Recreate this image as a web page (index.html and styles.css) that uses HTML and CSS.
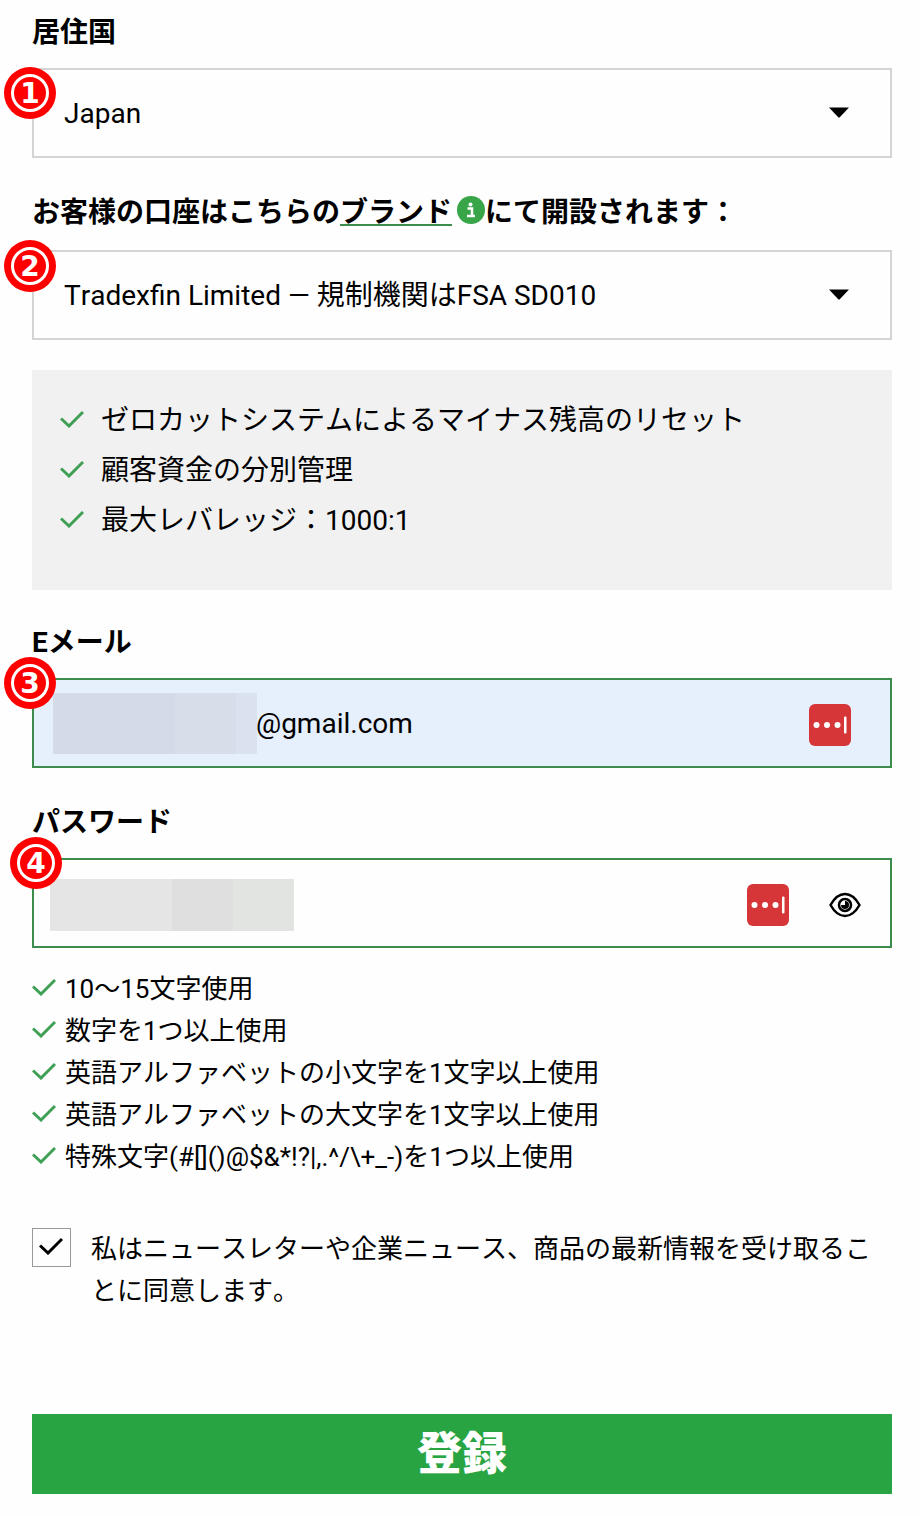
FILE: index.html
```html
<!DOCTYPE html>
<html lang="ja">

<head>
    <meta charset="UTF-8">
    <meta name="viewport" content="width=device-width, initial-scale=1.0">
    <title>登録</title>

    <link rel="stylesheet" href="styles.css">
</head>

<body>
    <!-- shared icons -->
    <svg class="icon-defs" width="0" height="0" aria-hidden="true">
        <symbol id="check" viewBox="0 0 24 18">
            <path d="M1 8.500L9 16L23 2" fill="none" stroke="currentColor" stroke-width="3" />
        </symbol>
        <symbol id="arrow" viewBox="0 0 20 11">
            <path d="M0 0.500H20L11 10Q10 11 9 10Z" fill="currentColor" />
        </symbol>
        <symbol id="vault" viewBox="0 0 42 42">
            <rect width="42" height="42" rx="6" fill="#d63638" />
            <circle cx="7.500" cy="21" r="3" fill="#fff" />
            <circle cx="18" cy="21" r="3" fill="#fff" />
            <circle cx="28.500" cy="21" r="3" fill="#fff" />
            <rect x="35" y="12.500" width="2.500" height="17" rx="1" fill="#fff" />
        </symbol>
    </svg>

    <form class="register-form">
        <div class="form-group">
            <label class="form-label" for="country">居住国</label>
            <div class="field">
                <span class="badge badge-country">1</span>
                <select class="form-control" id="country">
                    <option>Japan</option>
                </select>
                <svg class="field-arrow" aria-hidden="true"><use href="#arrow" /></svg>
            </div>
        </div>

        <div class="form-group form-group-brand">
            <label class="form-label" for="brand">お客様の口座はこちらの<a class="brand-link" href="#">ブランド</a><svg class="info-icon"
                    viewBox="0 0 28 28" aria-hidden="true">
                    <circle cx="14" cy="14" r="14" fill="#37a548" />
                    <circle cx="13.500" cy="8.500" r="2" fill="#fff" />
                    <path d="M10.500 12.500H15V20M10 20H18" fill="none" stroke="#fff" stroke-width="2.500" />
                </svg>にて開設されます：</label>
            <div class="field">
                <span class="badge badge-brand">2</span>
                <select class="form-control" id="brand">
                    <option>Tradexfin Limited — 規制機関はFSA SD010</option>
                </select>
                <svg class="field-arrow" aria-hidden="true"><use href="#arrow" /></svg>
            </div>
        </div>

        <ul class="benefits">
            <li><svg class="check" aria-hidden="true"><use href="#check" /></svg>ゼロカットシステムによるマイナス残高のリセット</li>
            <li><svg class="check" aria-hidden="true"><use href="#check" /></svg>顧客資金の分別管理</li>
            <li><svg class="check" aria-hidden="true"><use href="#check" /></svg>最大レバレッジ：1000:1</li>
        </ul>

        <div class="form-group">
            <label class="form-label" for="email">Eメール</label>
            <div class="field">
                <span class="badge">3</span>
                <input class="form-control valid email-input" type="text" id="email" value="@gmail.com">
                <span class="mask mask-email"></span>
                <div class="field-tools tools-email">
                    <button class="tool" type="button" aria-label="Vault"><svg class="vault"><use href="#vault" /></svg></button>
                </div>
            </div>
        </div>

        <div class="form-group form-group-password">
            <label class="form-label" for="password">パスワード</label>
            <div class="field">
                <span class="badge badge-password">4</span>
                <input class="form-control valid" type="password" id="password">
                <span class="mask mask-password"></span>
                <div class="field-tools">
                    <button class="tool" type="button" aria-label="Vault"><svg class="vault"><use href="#vault" /></svg></button>
                    <button class="tool" type="button" aria-label="Show password">
                        <svg class="eye" viewBox="0 0 32 26">
                            <path d="M1.500 13C6 5 10.500 2 16 2S26 5 30.500 13C26 21 21.500 24 16 24S6 21 1.500 13Z" fill="none" stroke="#000" stroke-width="2.500" />
                            <circle cx="16" cy="13" r="6" fill="none" stroke="#000" stroke-width="2.500" />
                            <path d="M16 9V13H12A4 4 0 1 0 16 9Z" fill="#000" />
                        </svg>
                    </button>
                </div>
            </div>
        </div>

        <ul class="rules">
            <li><svg class="check" aria-hidden="true"><use href="#check" /></svg>10～15文字使用</li>
            <li><svg class="check" aria-hidden="true"><use href="#check" /></svg>数字を1つ以上使用</li>
            <li><svg class="check" aria-hidden="true"><use href="#check" /></svg>英語アルファベットの小文字を1文字以上使用</li>
            <li><svg class="check" aria-hidden="true"><use href="#check" /></svg>英語アルファベットの大文字を1文字以上使用</li>
            <li><svg class="check" aria-hidden="true"><use href="#check" /></svg>特殊文字(#[]()@$&amp;*!?|,.^/\+_-)を1つ以上使用</li>
        </ul>

        <div class="newsletter">
            <div class="checkbox">
                <input type="checkbox" id="newsletter" checked>
                <svg class="check" aria-hidden="true"><use href="#check" /></svg>
            </div>
            <label for="newsletter">私はニュースレターや企業ニュース、商品の最新情報を受け取ることに同意します。</label>
        </div>

        <button class="submit" type="submit">登録</button>
    </form>
</body>

</html>
```

FILE: styles.css
```css
* {
    box-sizing: border-box;
}

body {
    margin: 0;
    background-color: #fefefe;
    color: #000;
    font-family: Roboto, "Noto Sans CJK JP", sans-serif;
    font-size: 28px;
    font-kerning: none;
}

ul {
    list-style: none;
    margin: 0;
    padding: 0;
}

.icon-defs {
    position: absolute;
}

.register-form {
    padding: 10px 28px 22px 32px;
}

.form-group {
    margin-bottom: 32px;
}

.form-group-brand {
    margin-bottom: 30px;
}

.form-group-password {
    margin-bottom: 20px;
}

.form-label {
    display: flex;
    align-items: center;
    height: 40px;
    margin-bottom: 18px;
    font-weight: 700;
}

.form-group-brand .form-label {
    margin-bottom: 20px;
}

.brand-link {
    color: inherit;
    text-decoration: underline 2px #3c8c4d;
    text-decoration-skip-ink: none;
    text-underline-offset: 2px;
}

.info-icon {
    width: 28px;
    height: 28px;
    margin-left: 5px;
}

/* fields */
.field {
    position: relative;
}

.form-control {
    display: block;
    appearance: none;
    width: 100%;
    height: 90px;
    padding: 0 30px;
    border: 2px solid #d4d4d4;
    border-radius: 0;
    background-color: #fefefe;
    color: #000;
    font: inherit;
    font-kerning: none;
}

.valid {
    border-color: #3c8c4d;
}

.email-input {
    padding-left: 222px;
    background-color: #e6effc;
}

.field-arrow {
    position: absolute;
    top: 39px;
    right: 43px;
    width: 20px;
    height: 11px;
    pointer-events: none;
}

.field-tools {
    position: absolute;
    top: 2px;
    right: 31px;
    height: 100%;
    display: flex;
    align-items: center;
    gap: 40px;
}

.tools-email {
    right: 41px;
}

.tool {
    display: flex;
    padding: 0;
    border: 0;
    background: none;
    cursor: pointer;
}

.vault {
    width: 42px;
    height: 42px;
}

.eye {
    width: 32px;
    height: 26px;
}

/* blocks hiding the private values */
.mask {
    position: absolute;
}

.mask-email {
    top: 15px;
    left: 21px;
    width: 204px;
    height: 61px;
    background: linear-gradient(to right, #d4dae7 122px, #d8dee9 122px 183px, #dbe2ef 183px);
}

.mask-password {
    top: 21px;
    left: 18px;
    width: 244px;
    height: 52px;
    background: linear-gradient(to right, #e5e5e5 122px, #dfdfe0 122px 183px, #e1e4e0 183px);
}

/* step numbers */
.badge {
    position: absolute;
    top: -21px;
    left: -28px;
    z-index: 1;
    width: 52px;
    height: 52px;
    border-radius: 50%;
    background-color: #f00;
    color: #fff;
    font: 700 28px/54px "DejaVu Sans", sans-serif;
    text-align: center;
}

.badge::before {
    content: "";
    position: absolute;
    inset: 7px;
    border: 3px solid #fff;
    border-radius: 50%;
}

.badge-country {
    top: -1px;
}

.badge-brand {
    top: -10px;
}

.badge-password {
    left: -22px;
}

/* lists */
.check {
    width: 24px;
    height: 18px;
    flex-shrink: 0;
}

.benefits {
    margin-bottom: 30px;
    padding: 26px 28px 44px;
    background-color: #f1f1f1;
    line-height: 50px;
}

.benefits li {
    display: flex;
    align-items: center;
    gap: 17px;
}

.benefits .check,
.rules .check {
    margin-bottom: 4px;
    color: #3fa055;
}

.rules {
    margin-bottom: 50px;
    font-size: 26px;
    line-height: 42px;
}

.rules li {
    display: flex;
    align-items: center;
    gap: 9px;
}

.newsletter {
    display: flex;
    gap: 20px;
    margin-bottom: 102px;
    font-size: 26px;
    line-height: 42px;
}

.checkbox {
    position: relative;
    flex-shrink: 0;
    width: 39px;
    height: 39px;
}

.checkbox input {
    display: block;
    appearance: none;
    width: 100%;
    height: 100%;
    margin: 0;
    border: 1px solid #999;
}

.checkbox .check {
    position: absolute;
    top: 9px;
    left: 7px;
    pointer-events: none;
}

.submit {
    display: block;
    width: 100%;
    height: 80px;
    padding: 0 0 6px;
    border: 0;
    background-color: #28a442;
    color: #fff;
    font: 900 45px/74px "Noto Sans CJK JP", sans-serif;
    cursor: pointer;
}
```
